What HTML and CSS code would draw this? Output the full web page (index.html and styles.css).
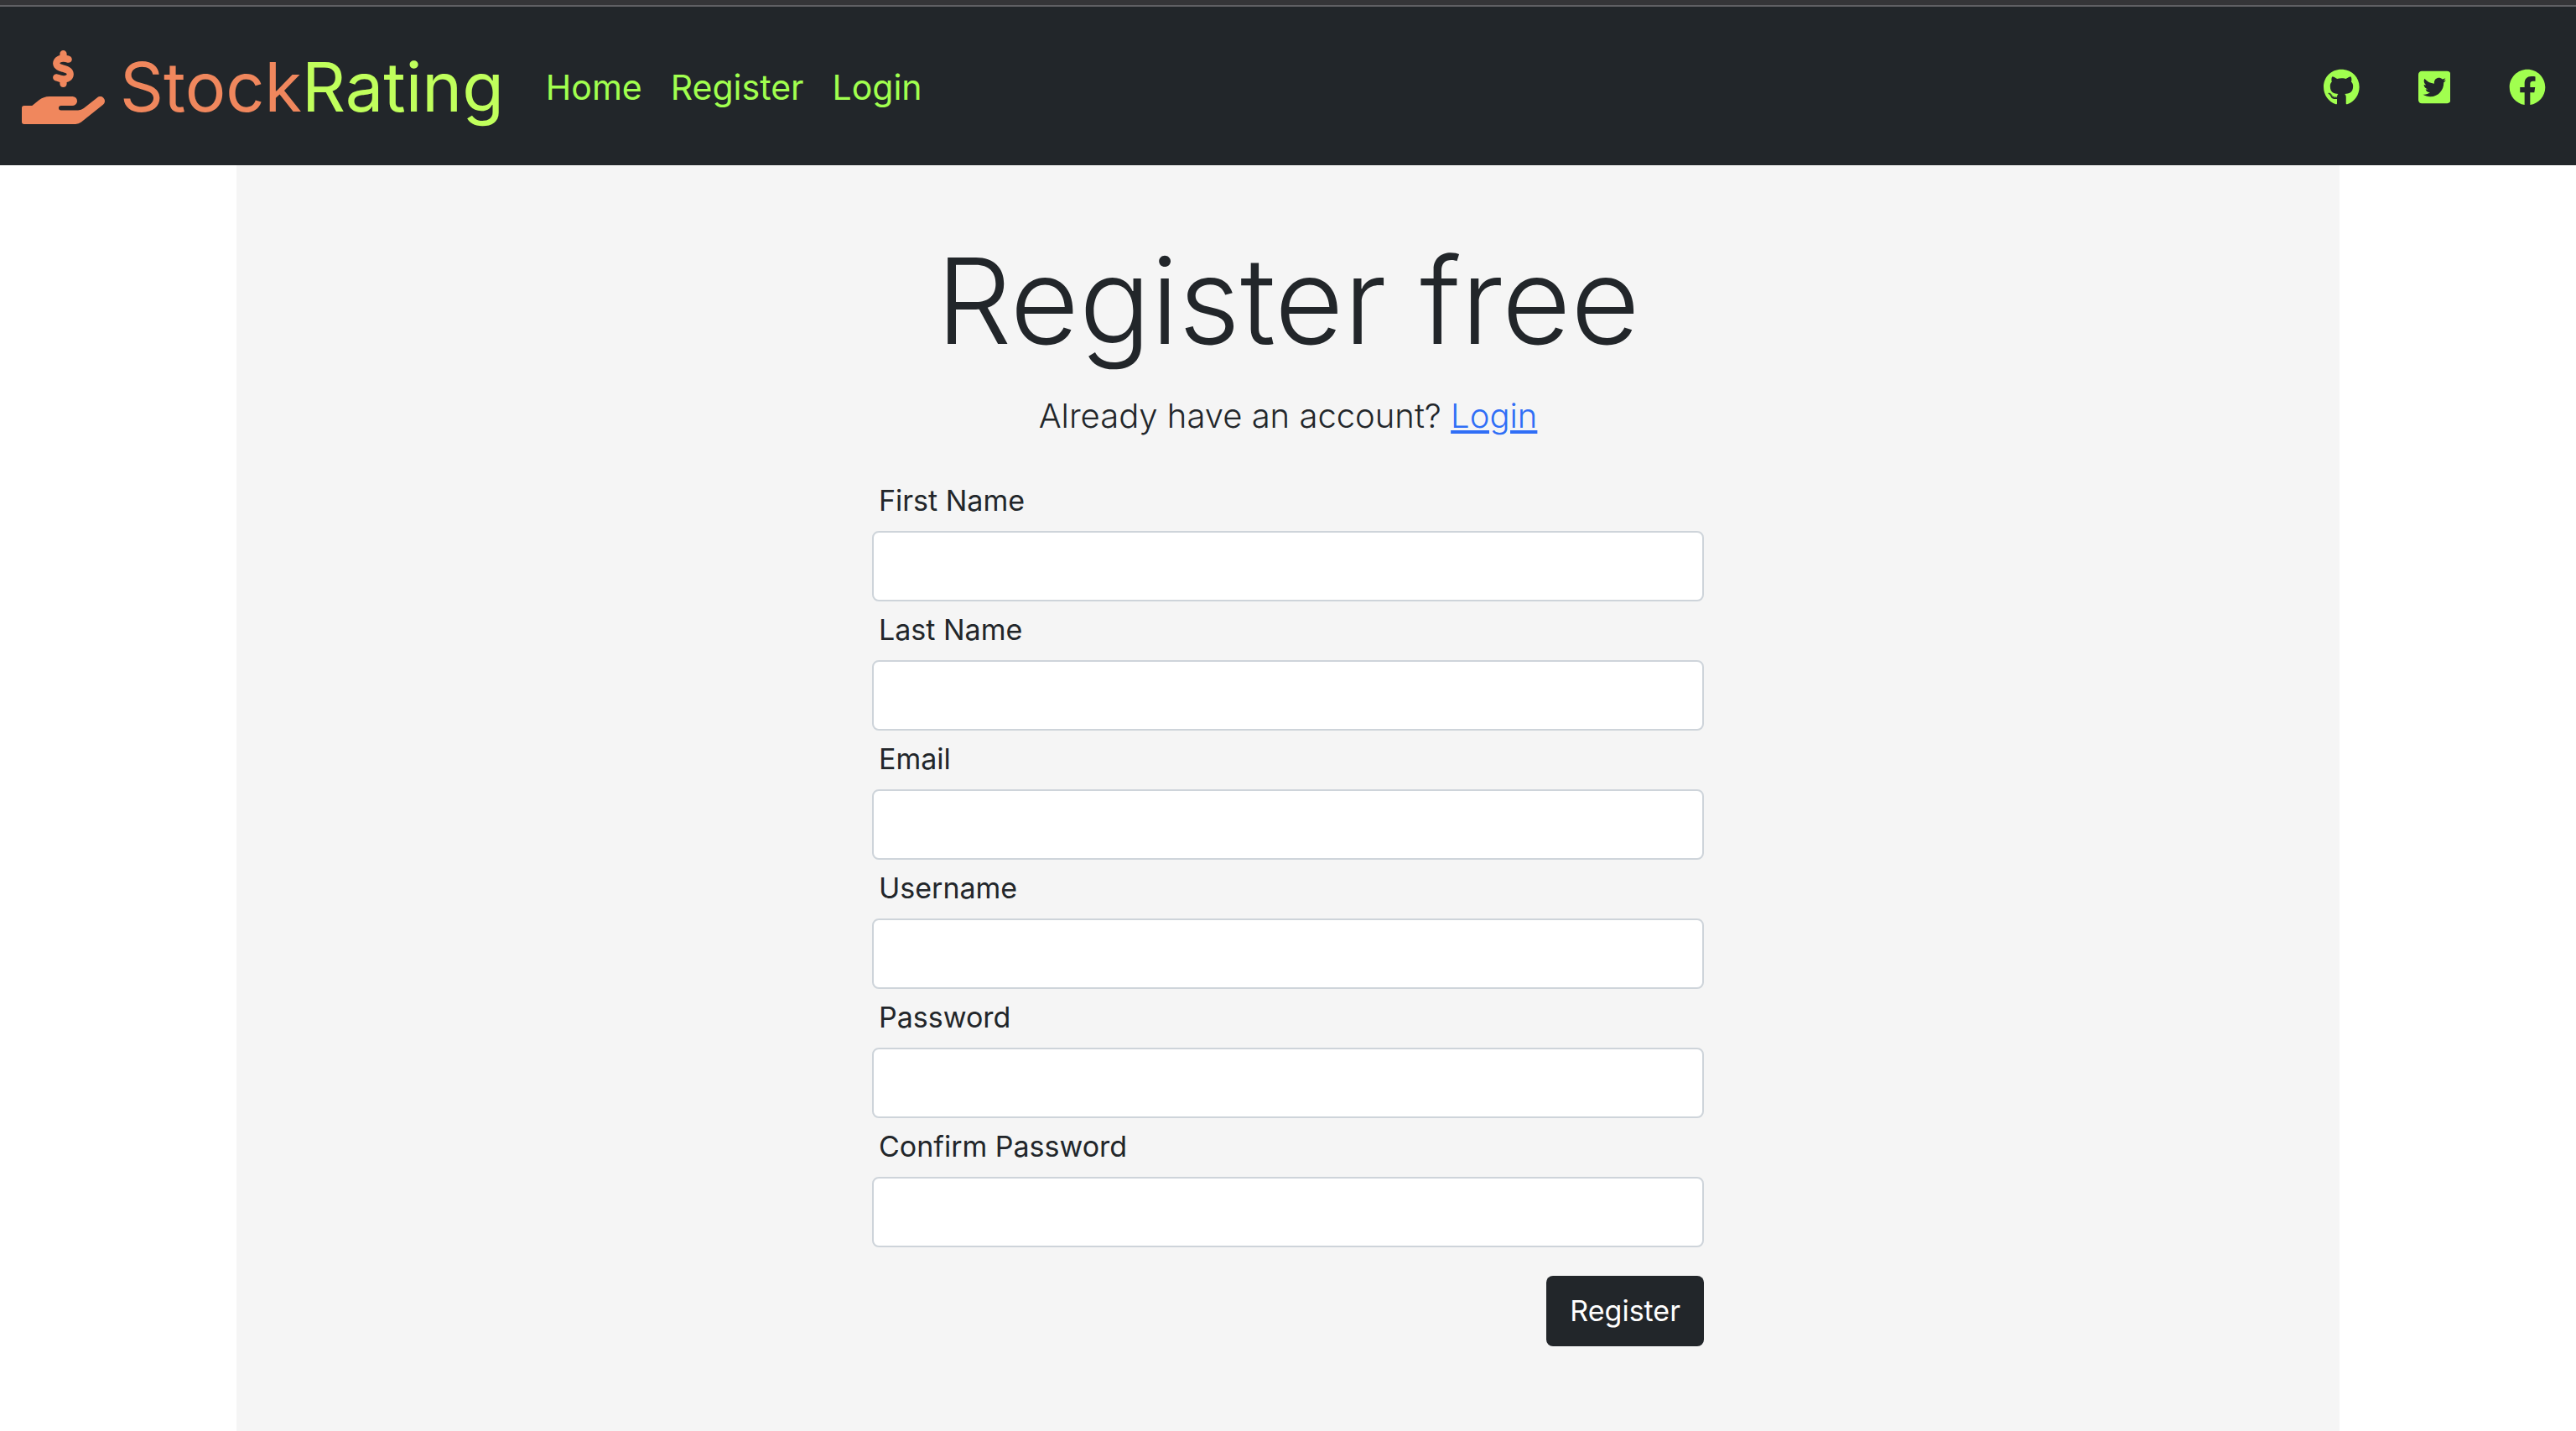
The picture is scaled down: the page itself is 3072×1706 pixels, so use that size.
FILE: index.html
```html
<!DOCTYPE html>
<html lang="en">
<head>
<meta charset="utf-8">
<meta name="viewport" content="width=device-width, initial-scale=1">
<title>StockRating - Register</title>
<link rel="stylesheet" href="styles.css">
</head>
<body>
<header class="navbar">
  <a class="brand" href="#">
    <svg class="brand-icon" viewBox="0 0 576 512" aria-hidden="true"><path d="M312 24V34.5c6.4 1.2 12.6 2.7 18.2 4.2c12.8 3.4 20.4 16.6 17 29.4s-16.6 20.4-29.4 17c-10.9-2.9-21.1-4.9-30.2-5c-7.3-.1-14.7 1.7-19.4 4.4c-2.1 1.3-3.1 2.4-3.5 3c-.3 .5-.7 1.2-.7 2.8c0 .3 0 .5 0 .6c.2 .2 .9 1.2 3.3 2.6c5.8 3.5 14.4 6.2 27.4 10.1l.9 .3c11.1 3.3 25.9 7.8 37.9 15.3c13.7 8.6 26.1 22.9 26.4 44.9c.3 22.5-11.4 38.9-26.7 48.5c-6.7 4.1-13.9 7-21.3 8.8V232c0 13.3-10.7 24-24 24s-24-10.7-24-24V220.6c-9.5-2.3-18.2-5.3-25.6-7.8c-2.1-.7-4.1-1.4-6-2c-12.6-4.2-19.4-17.8-15.2-30.4s17.8-19.4 30.4-15.2c2.6 .9 5 1.7 7.3 2.5c13.6 4.6 23.4 7.9 33.9 8.3c8 .3 15.1-1.6 19.2-4.1c1.9-1.2 2.8-2.2 3.2-2.9c.4-.6 .9-1.8 .8-4.1l0-.2c0-1 0-2.1-4-4.6c-5.7-3.6-14.3-6.4-27.1-10.3l-1.9-.6c-10.8-3.2-25-7.5-36.4-14.4c-13.5-8.1-26.5-22-26.6-44.1c-.1-22.9 12.9-38.6 27.7-47.4c6.4-3.8 13.3-6.4 20.2-8.2V24c0-13.3 10.7-24 24-24s24 10.7 24 24z"/><path d="M565.27,328.1c-11.8-10.7-30.2-10-42.6,0L430.27,402a63.64,63.64,0,0,1-40,14H272a16,16,0,0,1,0-32h78.29c15.9,0,30.71-10.9,33.25-26.6a31.2,31.2,0,0,0,.46-5.46A32,32,0,0,0,352,320H192a117.66,117.66,0,0,0-74.1,26.29L71.4,384H16A16,16,0,0,0,0,400v96a16,16,0,0,0,16,16H372.77a64,64,0,0,0,40-14L564,377a32,32,0,0,0,1.28-48.9Z"/></svg>
    <span class="brand-name"><span class="brand-stock">Stock</span><span class="brand-rating">Rating</span></span>
  </a>
  <nav class="nav-links" aria-label="Main">
    <a href="#">Home</a>
    <a href="#">Register</a>
    <a href="#">Login</a>
  </nav>
  <nav class="social" aria-label="Social">
    <a href="#" aria-label="GitHub"><svg viewBox="0 0 496 512"><path d="M165.900 397.400c0 2-2.300 3.600-5.200 3.600-3.300.3-5.600-1.300-5.600-3.600 0-2 2.300-3.600 5.200-3.600 3-.3 5.600 1.300 5.600 3.600zm-31.100-4.500c-.7 2 1.300 4.300 4.300 4.900 2.600 1 5.600 0 6.200-2s-1.300-4.300-4.300-5.200c-2.600-.7-5.500.3-6.200 2.300zm44.200-1.700c-2.900.7-4.900 2.600-4.600 4.900.3 2 2.900 3.300 5.900 2.600 2.900-.7 4.900-2.600 4.600-4.600-.3-1.900-3-3.200-5.900-2.900zM244.800 8C106.100 8 0 113.300 0 252c0 110.900 69.800 205.800 169.500 239.200 12.800 2.300 17.300-5.600 17.300-12.100 0-6.200-.3-40.400-.3-61.400 0 0-70 15-84.700-29.800 0 0-11.400-29.100-27.800-36.600 0 0-22.900-15.700 1.600-15.400 0 0 24.900 2 38.600 25.800 21.900 38.600 58.600 27.500 72.900 20.900 2.300-16 8.800-27.100 16-33.700-55.900-6.200-112.300-14.300-112.300-110.500 0-27.500 7.600-41.300 23.600-58.900-2.600-6.500-11.100-33.300 2.600-67.900 20.900-6.500 69 27 69 27 20-5.600 41.500-8.500 62.800-8.500s42.800 2.900 62.800 8.500c0 0 48.100-33.600 69-27 13.700 34.700 5.200 61.400 2.600 67.900 16 17.700 25.800 31.500 25.800 58.900 0 96.500-58.900 104.200-114.800 110.500 9.200 7.900 17 22.900 17 46.400 0 33.700-.3 75.400-.3 83.600 0 6.500 4.600 14.400 17.300 12.100C428.200 457.800 496 362.900 496 252 496 113.300 383.500 8 244.800 8zM97.200 352.900c-1.300 1-1 3.300.7 5.200 1.600 1.600 3.900 2.300 5.200 1 1.300-1 1-3.300-.7-5.200-1.600-1.600-3.900-2.300-5.200-1zm-10.800-8.100c-.7 1.300.3 2.900 2.300 3.900 1.600 1 3.600.7 4.300-.7.7-1.300-.3-2.900-2.300-3.900-2-.6-3.600-.3-4.300.7zm32.400 35.600c-1.600 1.300-1 4.300 1.300 6.200 2.300 2.300 5.200 2.600 6.500 1 1.300-1.300.7-4.300-1.300-6.200-2.200-2.300-5.200-2.600-6.500-1zm-11.400-14.700c-1.600 1-1.600 3.600 0 5.900 1.600 2.300 4.300 3.300 5.600 2.300 1.600-1.300 1.600-3.900 0-6.200-1.400-2.300-4-3.300-5.600-2z"/></svg></a>
    <a href="#" aria-label="Twitter"><svg viewBox="0 0 448 512"><path d="M400 32H48C21.500 32 0 53.500 0 80v352c0 26.500 21.500 48 48 48h352c26.500 0 48-21.500 48-48V80c0-26.500-21.500-48-48-48zm-48.900 158.800c.2 2.800.2 5.700.2 8.500 0 86.700-66 186.600-186.600 186.600-37.200 0-71.700-10.800-100.700-29.400 5.300.6 10.400.8 15.800.8 30.700 0 58.900-10.400 81.400-28-28.800-.6-53-19.500-61.300-45.500 10.100 1.500 19.200 1.500 29.600-1.200-30-6.100-52.500-32.500-52.500-64.400v-.8c8.700 4.900 18.900 7.900 29.600 8.300a65.447 65.447 0 0 1-29.200-54.600c0-12.200 3.200-23.400 8.900-33.100 32.300 39.800 80.800 65.800 135.200 68.600-9.300-44.500 24-80.600 64-80.600 18.900 0 35.900 7.900 47.900 20.700 14.800-2.800 29-8.300 41.600-15.800-4.900 15.200-15.200 28-28.800 36.100 13.200-1.400 26-5.100 37.800-10.200-8.900 13.100-20.100 24.700-32.900 34z"/></svg></a>
    <a href="#" aria-label="Facebook"><svg viewBox="0 0 512 512"><path d="M504 256C504 119 393 8 256 8S8 119 8 256c0 123.780 90.690 226.380 209.250 245V327.690h-63V256h63v-54.640c0-62.150 37-96.480 93.670-96.480 27.140 0 55.520 4.840 55.520 4.840v61h-31.280c-30.800 0-40.410 19.120-40.410 38.730V256h68.780l-11 71.690h-57.780V501C413.310 482.380 504 379.780 504 256z"/></svg></a>
  </nav>
</header>
<main class="container">
  <h1>Register free</h1>
  <p class="lead">Already have an account? <a href="#">Login</a></p>
  <form class="form">
    <div class="field"><label for="first">First Name</label><input id="first" type="text"></div>
    <div class="field"><label for="last">Last Name</label><input id="last" type="text"></div>
    <div class="field"><label for="email">Email</label><input id="email" type="email"></div>
    <div class="field"><label for="user">Username</label><input id="user" type="text"></div>
    <div class="field"><label for="pass">Password</label><input id="pass" type="password"></div>
    <div class="field"><label for="confirm">Confirm Password</label><input id="confirm" type="password"></div>
    <button class="submit" type="submit">Register</button>
  </form>
</main>
</body>
</html>
```
FILE: styles.css
```css
*, *::before, *::after { box-sizing: border-box; }

body {
  margin: 0;
  min-height: 100vh;
  display: flex;
  flex-direction: column;
  border-top: 6px solid #353538;
  background: #fff;
  color: #22262a;
  font-family: Inter, "Liberation Sans", sans-serif;
  font-size: 34px;
  line-height: 52px;
}

.navbar {
  display: flex;
  align-items: center;
  padding: 30px 36px 27px 26px;
  border-top: 2px solid #606064;
  background: #22262a;
}

.brand {
  display: flex;
  align-items: center;
  gap: 18px;
  font-size: 81px;
  line-height: 132px;
  text-decoration: none;
}

.brand-icon {
  width: 99px;
  height: 88px;
  fill: #f0875d;
}

.brand-stock { color: #f0875d; }
.brand-rating { color: #c0ff5c; }

.nav-links {
  display: flex;
  gap: 34px;
  margin-left: 50px;
  font-size: 41px;
}

.nav-links a {
  color: #a1ff4f;
  text-decoration: none;
}

.social {
  display: flex;
  gap: 70px;
  margin-left: auto;
}

.social a { display: flex; }

.social svg {
  height: 44px;
  fill: #a1ff4f;
}

.container {
  flex: 1;
  width: 100%;
  max-width: 2508px;
  margin: 0 auto;
  padding: 66px 26px;
  background: #f5f5f5;
}

h1 {
  margin: 0 0 10px;
  font-size: 142px;
  font-weight: 300;
  line-height: 190px;
  text-align: center;
}

.lead {
  margin: 0 0 42px;
  font-size: 40px;
  font-weight: 300;
  line-height: 66px;
  text-align: center;
}

.lead a {
  color: #2f6ef6;
  text-decoration-thickness: 4px;
  text-underline-offset: 3px;
}

.form {
  display: flex;
  flex-direction: column;
  width: 100%;
  max-width: 992px;
  margin: 0 auto;
}

.field {
  display: flex;
  flex-direction: column;
  margin-bottom: 8px;
}

.field label {
  margin-bottom: 10px;
  padding-left: 8px;
}

.field input {
  width: 100%;
  height: 84px;
  padding: 12px 26px;
  border: 2px solid #ced4da;
  border-radius: 8px;
  background: #fff;
  color: inherit;
  font: inherit;
}

.submit {
  align-self: flex-end;
  margin-top: 26px;
  padding: 16px 28px;
  border: 0;
  border-radius: 8px;
  background: #22262a;
  color: #fff;
  font: inherit;
}
```
